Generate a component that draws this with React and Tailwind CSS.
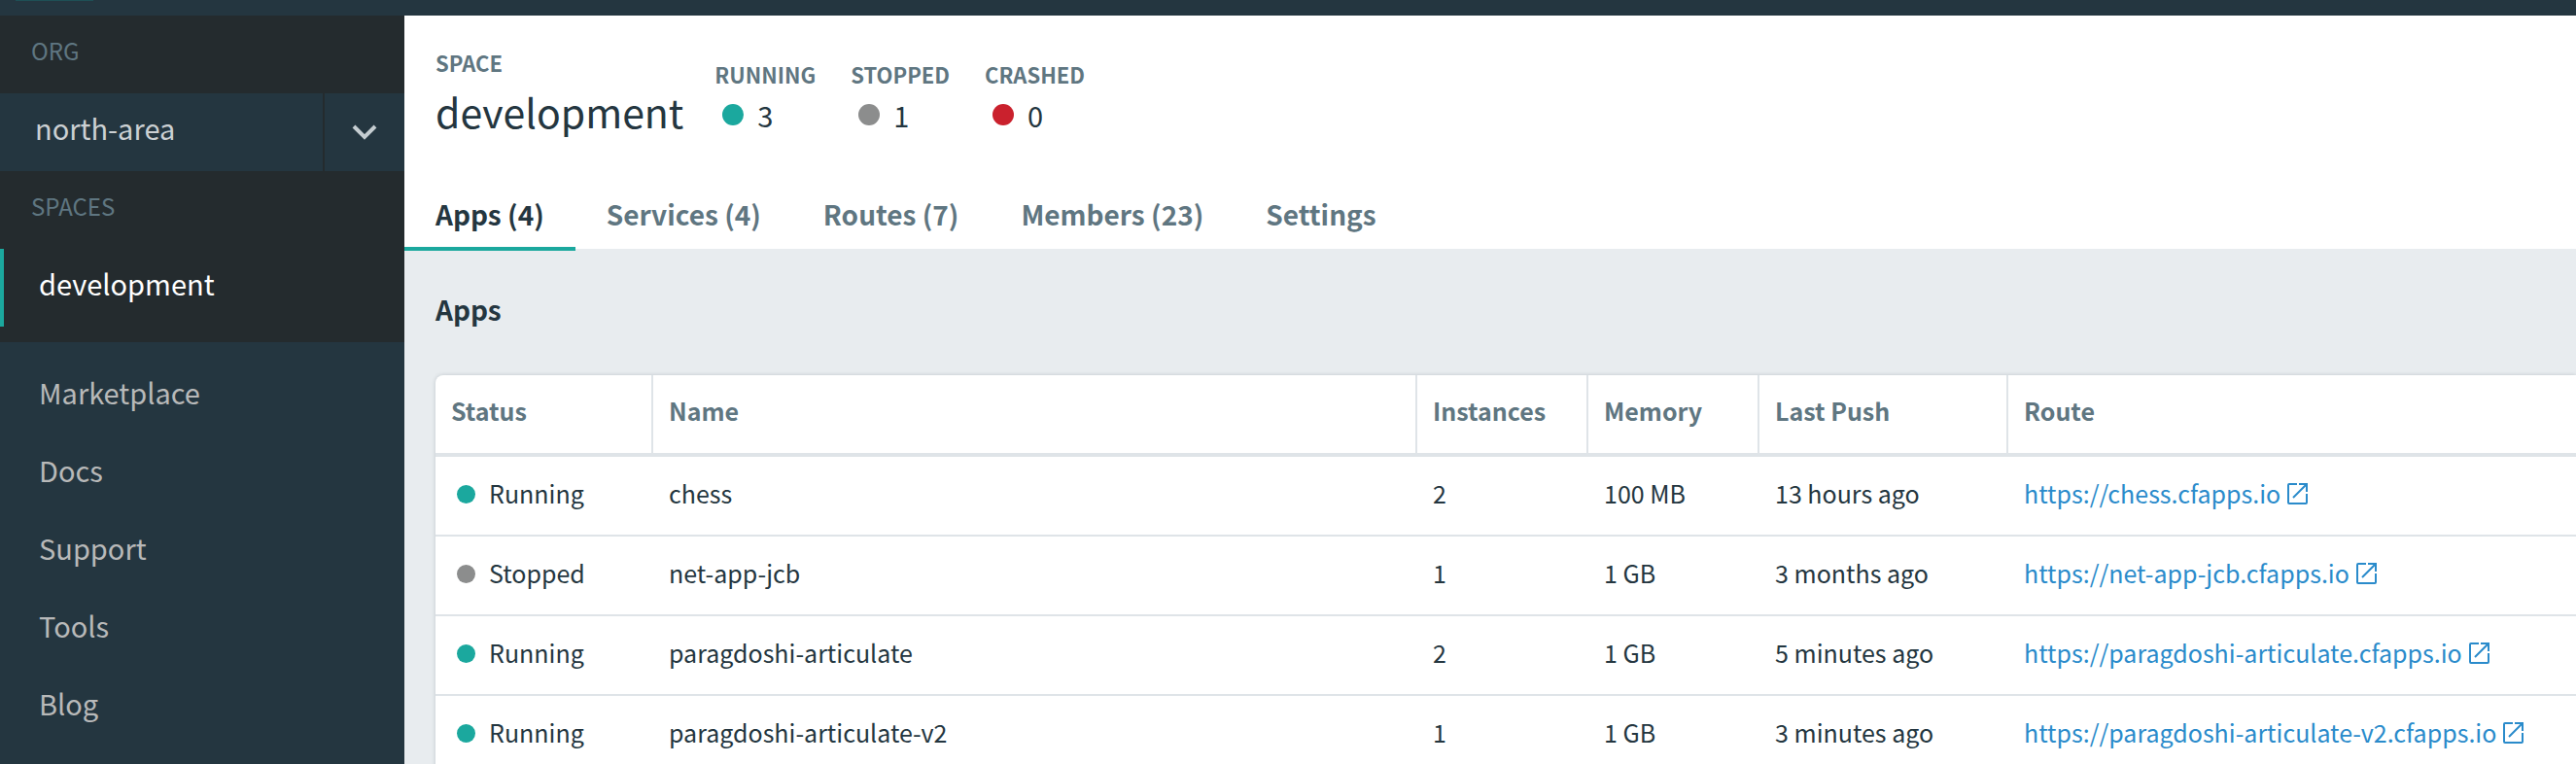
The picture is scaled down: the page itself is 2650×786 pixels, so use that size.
const FONT = "font-['Noto_Sans_CJK_SC','Noto_Sans',sans-serif]";

const nav = ["Marketplace", "Docs", "Support", "Tools", "Blog"];

const counts = [
  { label: "Running", value: 3, dot: "bg-[#1ba89e]" },
  { label: "Stopped", value: 1, dot: "bg-[#8c8d8d]" },
  { label: "Crashed", value: 0, dot: "bg-[#ca212d]" },
];

const tabs = ["Apps (4)", "Services (4)", "Routes (7)", "Members (23)", "Settings"];

const columns = [
  { title: "Status", width: "w-[224px]" },
  { title: "Name", width: "" },
  { title: "Instances", width: "w-[176px]" },
  { title: "Memory", width: "w-[176px]" },
  { title: "Last Push", width: "w-[256px]" },
  { title: "Route", width: "w-[584px]" },
];

const apps = [
  { status: "Running", name: "chess", instances: 2, memory: "100 MB", push: "13 hours ago" },
  { status: "Stopped", name: "net-app-jcb", instances: 1, memory: "1 GB", push: "3 months ago" },
  { status: "Running", name: "paragdoshi-articulate", instances: 2, memory: "1 GB", push: "5 minutes ago" },
  { status: "Running", name: "paragdoshi-articulate-v2", instances: 1, memory: "1 GB", push: "3 minutes ago" },
];

function OpenIcon() {
  return (
    <svg viewBox="0 0 24 24" className="h-6 w-6 shrink-0" fill="none" stroke="currentColor" strokeWidth="2" aria-hidden="true">
      <path d="M11 2H3a1 1 0 0 0-1 1v18a1 1 0 0 0 1 1h17a1 1 0 0 0 1-1v-9" />
      <path d="M13 2h8v8M21 2L7 16" />
    </svg>
  );
}

function Sidebar() {
  return (
    <aside className="w-[416px] shrink-0 text-[29px] text-[#b8b9b9]">
      <div className="bg-[#243640]">
        <h2 className="flex h-20 items-center bg-[#242b2e] px-8 pb-2 text-[24px] text-[#5f7681]">ORG</h2>
        <div className="flex h-20">
          <a href="#org" className="flex grow items-center border-r-2 border-[#242b2e] pb-2 pl-9 text-[#cbd0d3]">
            north-area
          </a>
          <button type="button" aria-label="Choose org" className="flex w-[82px] items-center justify-center text-[#c5cdd1]">
            <svg viewBox="0 0 28 18" className="h-[18px] w-7" fill="none" stroke="currentColor" strokeWidth="4" aria-hidden="true">
              <path d="M3 3l11 11L25 3" />
            </svg>
          </button>
        </div>
      </div>
      <div className="bg-[#242b2e] pb-4">
        <h2 className="flex h-20 items-center px-8 pb-2 text-[24px] text-[#5f7681]">SPACES</h2>
        <a href="#development" className="flex h-20 items-center border-l-4 border-[#1ba89e] pb-2 pl-9 text-white">
          development
        </a>
      </div>
      <nav className="pt-4">
        {nav.map((item) => (
          <a key={item} href={`#${item.toLowerCase()}`} className="flex h-20 items-center pb-2 pl-10">
            {item}
          </a>
        ))}
      </nav>
    </aside>
  );
}

function SpaceHeader() {
  return (
    <header className="bg-white">
      <div className="flex h-40 gap-8 px-8 pt-[30px]">
        <div>
          <p className="text-[22px] leading-9 font-bold text-[#5f7681]">SPACE</p>
          <h1 className="text-[41px] leading-[64px]">development</h1>
        </div>
        <dl className="flex gap-9 pt-3">
          {counts.map(({ label, value, dot }) => (
            <div key={label}>
              <dt className="text-[22px] leading-9 font-bold text-[#5f7681] uppercase">{label}</dt>
              <dd className="flex items-center gap-3.5 pl-2 text-[29px] leading-[48px]">
                <span className={`size-[22px] rounded-full ${dot}`} />
                {value}
              </dd>
            </div>
          ))}
        </dl>
      </div>
      <div role="tablist" className="flex h-20 items-stretch">
        {tabs.map((tab, i) => (
          <button
            key={tab}
            type="button"
            role="tab"
            aria-selected={i === 0}
            className={`relative px-8 pt-2 text-[28px] font-bold ${i === 0 ? "text-[#243640]" : "text-[#5f7681]"}`}
          >
            {tab}
            {i === 0 && <span className="absolute inset-x-0 -bottom-0.5 h-1 bg-[#1ba89e]" />}
          </button>
        ))}
      </div>
    </header>
  );
}

function AppsTable() {
  return (
    <table className="w-full table-fixed border-separate border-spacing-0 rounded-tl-lg bg-white text-left text-[25px] shadow-[0_0_4px_rgba(36,54,64,0.2)]">
      <thead>
        <tr>
          {columns.map(({ title, width }, i) => (
            <th
              key={title}
              scope="col"
              className={`h-[84px] border-b-4 border-[#dfe4e8] px-4 pb-1.5 font-bold text-[#5f7681] ${width} ${i < 5 ? "border-r-2" : ""}`}
            >
              {title}
            </th>
          ))}
        </tr>
      </thead>
      <tbody>
        {apps.map((app) => (
          <tr key={app.name} className="[&>td]:h-[82px] [&>td]:border-b-2 [&>td]:border-[#dfe4e8] [&>td]:px-4 [&>td]:pb-1">
            <td>
              <span className="flex items-center gap-3.5 pl-1.5">
                <span className={`size-[19px] rounded-full ${app.status === "Running" ? "bg-[#1ba89e]" : "bg-[#8c8d8d]"}`} />
                {app.status}
              </span>
            </td>
            <td>{app.name}</td>
            <td>{app.instances}</td>
            <td>{app.memory}</td>
            <td>{app.push}</td>
            <td>
              <a href={`https://${app.name}.cfapps.io`} className="flex items-center gap-1.5 whitespace-nowrap text-[#2a8bcb]">
                {`https://${app.name}.cfapps.io`}
                <OpenIcon />
              </a>
            </td>
          </tr>
        ))}
      </tbody>
    </table>
  );
}

export default function App() {
  return (
    <div className={`flex min-h-screen flex-col bg-[#243640] text-[#243640] ${FONT}`}>
      <div className="h-4 shrink-0 px-4">
        <div className="h-px w-20 bg-[#1e4f55]" />
      </div>
      <div className="flex grow">
        <Sidebar />
        <main className="min-w-0 grow bg-[#e8ecef]">
          <SpaceHeader />
          <section className="pl-8">
            <h2 className="flex h-[130px] items-center pb-1.5 text-[28px] font-bold">Apps</h2>
            <AppsTable />
          </section>
        </main>
      </div>
    </div>
  );
}
